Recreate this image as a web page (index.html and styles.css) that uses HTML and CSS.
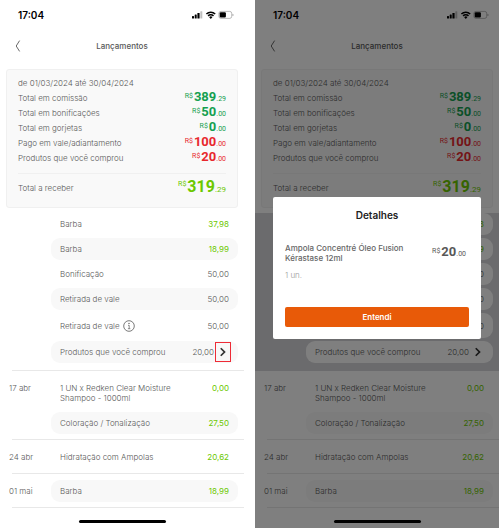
FILE: index.html
```
<!DOCTYPE html>
<html lang="pt-BR">
<head>
    <meta charset="UTF-8">
    <meta name="viewport" content="width=device-width, initial-scale=1.0">
    <title>Lançamentos</title>
    <link rel="stylesheet" href="styles.css">
</head>
<body>
    <!-- Shared icons -->
    <svg class="sprite" aria-hidden="true">
        <symbol id="status" viewBox="0 0 42 10">
            <rect x="0" y="6" width="2" height="2.5" rx=".5"/>
            <rect x="2.7" y="4.6" width="2" height="3.9" rx=".5"/>
            <rect x="5.4" y="3" width="2.2" height="5.5" rx=".5"/>
            <rect x="8.3" y="1.2" width="2" height="7.3" rx=".5" opacity=".25"/>
            <path d="M14.4 4a6.2 6.2 0 0 1 8.8 0M16.1 5.9a3.8 3.8 0 0 1 5.4 0" fill="none" stroke="currentColor" stroke-width="1.5"/>
            <path d="M17.2 7.2a2.2 2.2 0 0 1 3.2 0l-1.6 1.7z"/>
            <rect x="26.9" y="1.4" width="12.8" height="7" rx="2" fill="none" stroke="currentColor" stroke-width=".6" opacity=".45"/>
            <rect x="27.7" y="2.2" width="6.2" height="5.4" rx="1.1"/>
            <path d="M40.6 3.7v2.4q.9-.3.9-1.2t-.9-1.2z" opacity=".45"/>
        </symbol>
        <symbol id="back" viewBox="0 0 6 12">
            <path d="M4.6.6 1.2 6l3.4 5.4" fill="none" stroke="currentColor" stroke-width=".9"/>
        </symbol>
        <symbol id="next" viewBox="0 0 6 8">
            <path d="m1.2 1 3 3-3 3" fill="none" stroke="currentColor" stroke-width="1.4"/>
        </symbol>
        <symbol id="info" viewBox="0 0 12 12">
            <circle cx="6" cy="6" r="5.3" fill="none" stroke="currentColor" stroke-width=".8"/>
            <circle cx="6" cy="3.4" r=".7"/>
            <path d="M5 5.3h1.2v3.3M4.9 8.7h2.4" fill="none" stroke="currentColor" stroke-width=".7"/>
        </symbol>
    </svg>

    <div class="screens">
        <section class="phone">
            <div class="status-bar">
                <span class="time">17:04</span>
                <svg class="status-icons"><use href="#status"/></svg>
            </div>
            <header class="header">
                <button class="back" aria-label="Voltar"><svg><use href="#back"/></svg></button>
                <h1 class="title">Lançamentos</h1>
            </header>

            <div class="card">
                <p class="period">de 01/03/2024 até 30/04/2024</p>
                <div class="line"><span>Total em comissão</span><span class="money green"><small>R$</small><b>389</b><i>.29</i></span></div>
                <div class="line"><span>Total em bonificações</span><span class="money green"><small>R$</small><b>50</b><i>.00</i></span></div>
                <div class="line"><span>Total em gorjetas</span><span class="money green"><small>R$</small><b>0</b><i>.00</i></span></div>
                <div class="line"><span>Pago em vale/adiantamento</span><span class="money red"><small>R$</small><b>100</b><i>.00</i></span></div>
                <div class="line"><span>Produtos que você comprou</span><span class="money red"><small>R$</small><b>20</b><i>.00</i></span></div>
                <div class="line total"><span>Total a receber</span><span class="money lime"><small>R$</small><b>319</b><i>.29</i></span></div>
            </div>

            <div class="group first">
                <span class="date"></span>
                <div class="rows">
                    <div class="row"><span>Barba</span><span class="lime">37,98</span></div>
                    <div class="row pill"><span>Barba</span><span class="lime">18,99</span></div>
                    <div class="row"><span>Bonificação</span><span>50,00</span></div>
                    <div class="row pill"><span>Retirada de vale</span><span>50,00</span></div>
                    <div class="row with-info"><span>Retirada de vale <button class="info" aria-label="Informações"><svg><use href="#info"/></svg></button></span><span>50,00</span></div>
                    <div class="row pill with-next"><span>Produtos que você comprou</span><span>20,00</span><button class="next marked" aria-label="Ver detalhes"><svg><use href="#next"/></svg></button></div>
                </div>
            </div>
            <div class="group">
                <span class="date">17 abr</span>
                <div class="rows">
                    <div class="row tall"><span>1 UN x Redken Clear Moisture<br>Shampoo - 1000ml</span><span class="lime">0,00</span></div>
                    <div class="row pill"><span>Coloração / Tonalização</span><span class="lime">27,50</span></div>
                </div>
            </div>
            <div class="group">
                <span class="date">24 abr</span>
                <div class="rows">
                    <div class="row"><span>Hidratação com Ampolas</span><span class="lime">20,62</span></div>
                </div>
            </div>
            <div class="group">
                <span class="date">01 mai</span>
                <div class="rows">
                    <div class="row pill"><span>Barba</span><span class="lime">18,99</span></div>
                </div>
            </div>
            <div class="home-bar"></div>
        </section>

        <section class="phone">
            <div class="status-bar">
                <span class="time">17:04</span>
                <svg class="status-icons"><use href="#status"/></svg>
            </div>
            <header class="header">
                <button class="back" aria-label="Voltar"><svg><use href="#back"/></svg></button>
                <h1 class="title">Lançamentos</h1>
            </header>

            <div class="card">
                <p class="period">de 01/03/2024 até 30/04/2024</p>
                <div class="line"><span>Total em comissão</span><span class="money green"><small>R$</small><b>389</b><i>.29</i></span></div>
                <div class="line"><span>Total em bonificações</span><span class="money green"><small>R$</small><b>50</b><i>.00</i></span></div>
                <div class="line"><span>Total em gorjetas</span><span class="money green"><small>R$</small><b>0</b><i>.00</i></span></div>
                <div class="line"><span>Pago em vale/adiantamento</span><span class="money red"><small>R$</small><b>100</b><i>.00</i></span></div>
                <div class="line"><span>Produtos que você comprou</span><span class="money red"><small>R$</small><b>20</b><i>.00</i></span></div>
                <div class="line total"><span>Total a receber</span><span class="money lime"><small>R$</small><b>319</b><i>.29</i></span></div>
            </div>

            <div class="group first active">
                <span class="date"></span>
                <div class="rows">
                    <div class="row"><span></span><span class="lime">37,98</span></div>
                    <div class="row pill"><span></span><span class="lime">18,99</span></div>
                    <div class="row"><span></span><span>50,00</span></div>
                    <div class="row pill"><span></span><span>50,00</span></div>
                    <div class="row with-info"><span></span><span>50,00</span></div>
                    <div class="row pill with-next"><span>Produtos que você comprou</span><span>20,00</span><button class="next" aria-label="Ver detalhes"><svg><use href="#next"/></svg></button></div>
                </div>
            </div>
            <div class="group">
                <span class="date">17 abr</span>
                <div class="rows">
                    <div class="row tall"><span>1 UN x Redken Clear Moisture<br>Shampoo - 1000ml</span><span class="lime">0,00</span></div>
                    <div class="row pill"><span>Coloração / Tonalização</span><span class="lime">27,50</span></div>
                </div>
            </div>
            <div class="group">
                <span class="date">24 abr</span>
                <div class="rows">
                    <div class="row"><span>Hidratação com Ampolas</span><span class="lime">20,62</span></div>
                </div>
            </div>
            <div class="group">
                <span class="date">01 mai</span>
                <div class="rows">
                    <div class="row pill"><span>Barba</span><span class="lime">18,99</span></div>
                </div>
            </div>
            <div class="home-bar"></div>

            <!-- Product details -->
            <div class="overlay">
                <div class="modal" role="dialog" aria-labelledby="modal-title">
                    <h2 class="modal-title" id="modal-title">Detalhes</h2>
                    <div class="product">
                        <strong>Ampola Concentré Óleo Fusion<br>Kérastase 12ml</strong>
                        <span class="money"><small>R$</small><b>20</b><i>.00</i></span>
                    </div>
                    <p class="quantity">1 un.</p>
                    <button class="confirm">Entendi</button>
                </div>
            </div>
        </section>
    </div>
</body>
</html>
```
FILE: styles.css
```
* {
    box-sizing: border-box;
}

body {
    margin: 0;
    background-color: #fff;
    color: #585858;
    font-family: Inter, "Liberation Sans", sans-serif;
    font-size: 8px;
    font-weight: 300;
    line-height: 10px;
}

h1, h2, p {
    margin: 0;
}

button {
    padding: 0;
    border: 0;
    background: none;
    color: inherit;
    font: inherit;
    cursor: pointer;
}

svg {
    display: block;
    fill: currentColor;
}

.sprite {
    position: absolute;
    width: 0;
    height: 0;
}

.screens {
    display: grid;
    grid-template-columns: 1fr 1fr;
    gap: 11px;
    min-height: 100vh;
    padding-right: 1px;
}

.phone {
    position: relative;
    display: flex;
    flex-direction: column;
    background-color: #fff;
}

/* Top of the screen */
.status-bar {
    display: flex;
    align-items: center;
    justify-content: space-between;
    height: 29px;
    padding: 0 10px 0 18px;
    color: #000;
}

.time {
    font-size: 10px;
    font-weight: 600;
}

.status-icons {
    width: 42px;
    height: 10px;
}

.header {
    display: grid;
    grid-template-columns: 15px 1fr 15px;
    align-items: center;
    height: 33px;
    padding: 0 15px;
}

.back svg {
    width: 6px;
    height: 12px;
}

.title {
    font-size: 8px;
    font-weight: 500;
    text-align: center;
}

/* Summary card */
.card {
    margin: 7px 6px 5px;
    padding: 6px 11px 5px;
    border: 1px solid #f0f0f0;
    border-radius: 3px;
    background-color: #f9f9f9;
}

.period {
    line-height: 14px;
}

.line {
    display: flex;
    align-items: center;
    justify-content: space-between;
    height: 15px;
}

.money {
    display: flex;
    align-items: baseline;
    font-family: Roboto, "Liberation Sans", sans-serif;
    font-weight: 400;
    line-height: 12px;
}

.money small {
    align-self: flex-start;
    margin-right: 1px;
    font-size: 7px;
    line-height: 11px;
}

.money b {
    font-size: 13px;
    font-weight: 700;
}

.money i {
    font-size: 7px;
    font-style: normal;
}

.total {
    height: 29px;
    margin-top: 8px;
    border-top: 1px solid #f0f0f0;
}

.total .money {
    line-height: 16px;
}

.total .money b {
    font-size: 16px;
}

.total .money i {
    font-size: 8px;
}

.green {
    color: #14a050;
}

.red {
    color: #e8282d;
}

.lime {
    color: #6cc800;
}

/* Entries */
.group {
    display: grid;
    grid-template-columns: 42px 1fr;
    padding: 6px 6px 5px 9px;
    border-bottom: 1px solid transparent;
    background: linear-gradient(#e8e8e8, #e8e8e8) right bottom / calc(100% - 12px) 1px no-repeat border-box;
}

.group.first {
    padding-top: 0;
    padding-bottom: 7px;
}

.date {
    line-height: 22px;
}

.rows {
    display: grid;
    gap: 3px;
}

.row {
    display: flex;
    align-items: center;
    justify-content: space-between;
    height: 22px;
    padding: 0 9px;
    border-radius: 9px;
}

.row .lime {
    font-weight: 400;
}

.pill {
    background-color: #f8f8f8;
}

.tall {
    align-items: flex-start;
    height: 32px;
    padding-top: 6px;
}

.with-info {
    height: 25px;
}

.with-info span {
    display: flex;
    align-items: center;
    gap: 3px;
}

.info svg {
    width: 12px;
    height: 12px;
}

.with-next {
    gap: 1px;
    padding-right: 7px;
}

.with-next span:first-child {
    flex: 1;
}

.next {
    display: grid;
    place-items: center;
    width: 16px;
    height: 20px;
    color: #333;
}

.next svg {
    width: 8px;
    height: 10px;
}

.marked {
    border: 1px solid #ee2b36;
}

.active {
    background: #d6d6da;
}

.active .row {
    background-color: #fff;
}

.home-bar {
    align-self: center;
    width: 87px;
    height: 3px;
    margin: auto 0 5px;
    border-radius: 2px;
    background-color: #000;
}

/* Modal */
.overlay {
    position: absolute;
    inset: 0;
    display: flex;
    align-items: center;
    padding: 8px 18px 0;
    background-color: rgba(0, 0, 0, .5);
}

.modal {
    width: 100%;
    padding: 12px;
    border-radius: 2px;
    background-color: #fff;
}

.modal-title {
    color: #222;
    font-size: 10px;
    font-weight: 600;
    line-height: 13px;
    text-align: center;
}

.product {
    display: flex;
    align-items: center;
    justify-content: space-between;
    margin-top: 21px;
    padding-right: 3px;
}

.product strong {
    color: #666;
    font-weight: 500;
}

.quantity {
    margin-top: 7px;
    color: #999;
}

.confirm {
    display: block;
    width: 100%;
    height: 20px;
    margin-top: 27px;
    border-radius: 2px;
    background-color: #e85a08;
    color: #fff;
    font-weight: 600;
}
```
